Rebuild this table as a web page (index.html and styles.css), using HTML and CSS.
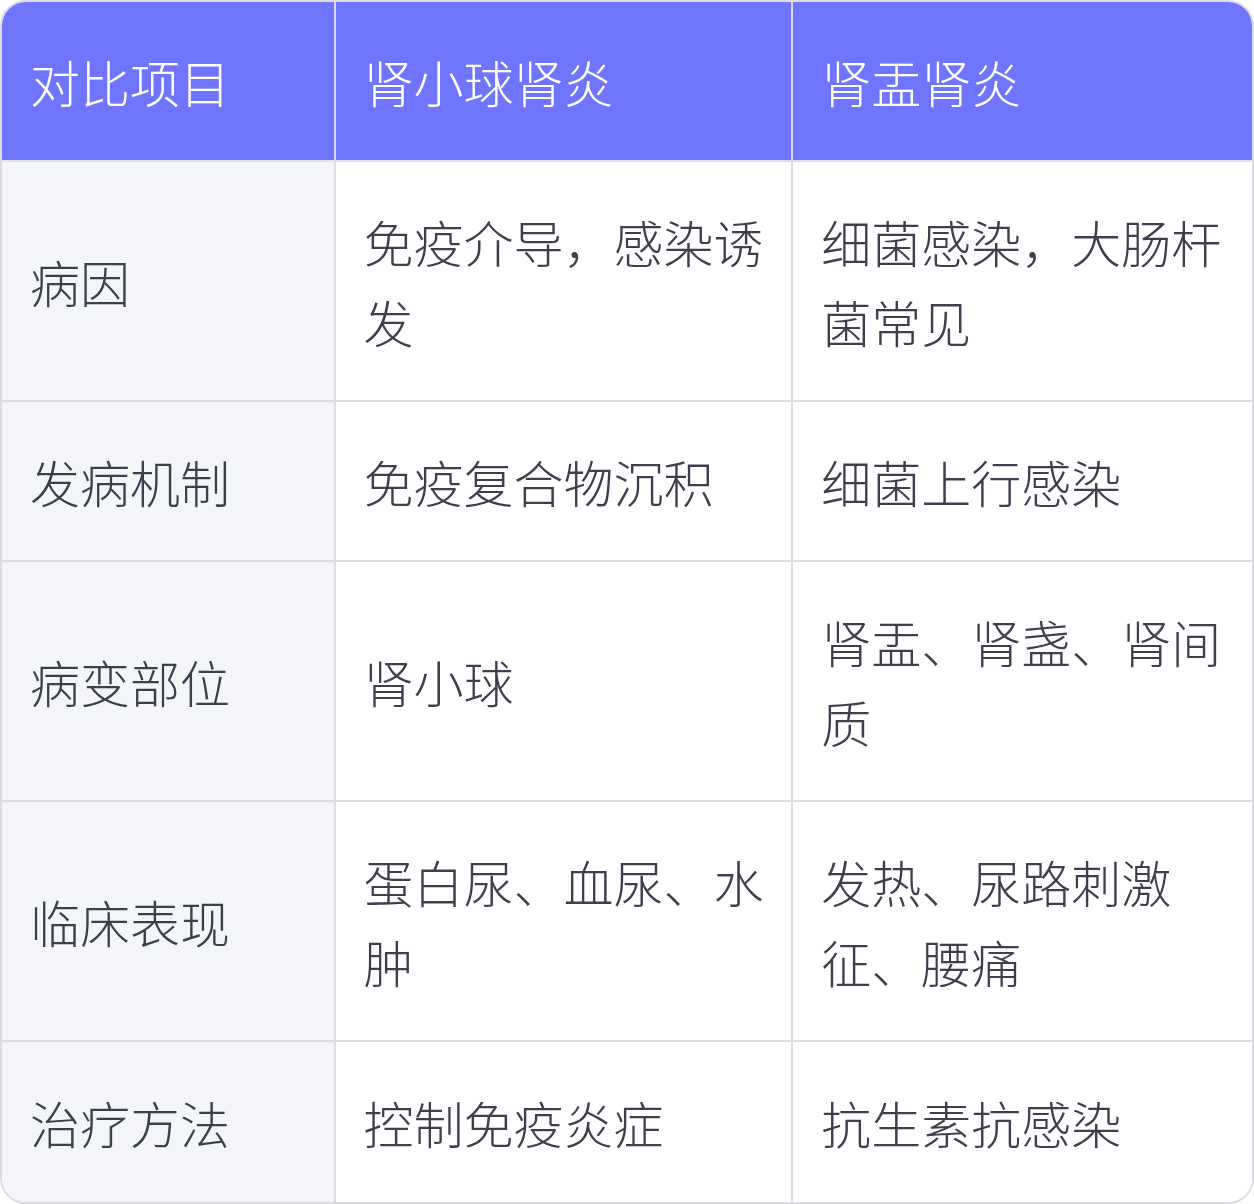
FILE: index.html
```html
<!DOCTYPE html>
<html lang="zh-CN">
<head>
<meta charset="utf-8">
<title>肾小球肾炎与肾盂肾炎对比</title>
<link rel="stylesheet" href="styles.css">
</head>
<body>
<div class="table-wrap">
  <table class="compare">
    <thead>
      <tr>
        <th class="c1">对比项目</th>
        <th class="c2">肾小球肾炎</th>
        <th class="c3">肾盂肾炎</th>
      </tr>
    </thead>
    <tbody>
      <tr>
        <td class="c1">病因</td>
        <td class="c2">免疫介导，感染诱发</td>
        <td class="c3">细菌感染，大肠杆菌常见</td>
      </tr>
      <tr>
        <td class="c1">发病机制</td>
        <td class="c2">免疫复合物沉积</td>
        <td class="c3">细菌上行感染</td>
      </tr>
      <tr>
        <td class="c1">病变部位</td>
        <td class="c2">肾小球</td>
        <td class="c3">肾盂、肾盏、肾间质</td>
      </tr>
      <tr>
        <td class="c1">临床表现</td>
        <td class="c2">蛋白尿、血尿、水肿</td>
        <td class="c3">发热、尿路刺激征、腰痛</td>
      </tr>
      <tr>
        <td class="c1">治疗方法</td>
        <td class="c2">控制免疫炎症</td>
        <td class="c3">抗生素抗感染</td>
      </tr>
    </tbody>
  </table>
</div>
</body>
</html>
```
FILE: styles.css
```css
html, body {
  margin: 0;
  padding: 0;
  background: #ffffff;
}

.table-wrap {
  width: 1254px;
  height: 1204px;
  box-sizing: border-box;
  border: 2px solid #dcdce0;
  border-radius: 26px;
  overflow: hidden;
}

.compare {
  width: 1250px;
  border-collapse: separate;
  border-spacing: 0;
  table-layout: fixed;
  font-family: "Noto Sans CJK SC", "Noto Sans", sans-serif;
  font-size: 50px;
  font-weight: 300;
  line-height: 80px;
  color: #3d3f4d;
}

.compare th,
.compare td {
  text-align: left;
  vertical-align: middle;
  padding: 39px 24px 39px 28px;
  border-right: 2px solid #dcdce2;
  border-bottom: 2px solid #dcdce2;
}

.compare th.c3,
.compare td.c3 {
  border-right: none;
}

.compare tbody tr:last-child td {
  border-bottom: none;
  padding-top: 40px;
  padding-bottom: 40px;
}

.compare th {
  background: #6f75ff;
  color: #ffffff;
  font-weight: 300;
  border-bottom-color: #dfe0ee;
  border-right-color: #d6d8ea;
}

.compare .c1 {
  width: 279px;
}

.compare .c2 {
  width: 403px;
}

.compare .c3 {
  width: 406px;
}

.compare td.c1 {
  background: #f4f5f9;
}

.compare td.c2,
.compare td.c3 {
  background: #ffffff;
}
```
